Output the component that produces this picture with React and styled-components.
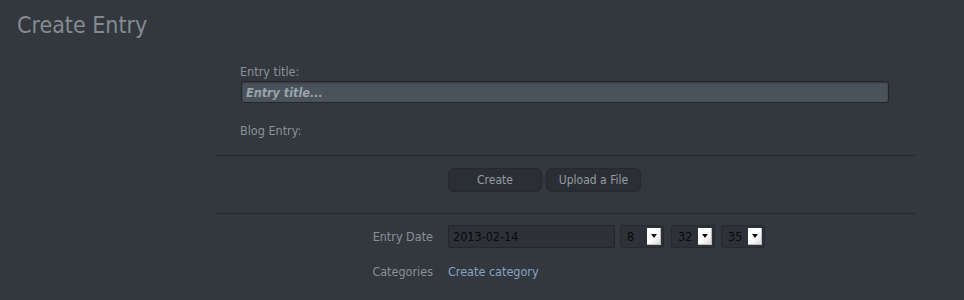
import React, { useState } from 'react'
import styled, { createGlobalStyle } from 'styled-components'

const GlobalStyle = createGlobalStyle`
  html, body {
    margin: 0;
    padding: 0;
    background: #33373e;
  }
  body {
    font-family: "DejaVu Sans Condensed", "DejaVu Sans", "Liberation Sans", sans-serif;
    font-stretch: condensed;
    color: #8d9399;
  }
`

const Page = styled.div`
  width: 964px;
  height: 300px;
  background: #33373e;
  overflow: hidden;
`

const Header = styled.div`
  padding: 12px 17px 0;
  height: 50px;
  box-sizing: border-box;
`

const Title = styled.h1`
  margin: 0;
  font-size: 23px;
  font-weight: normal;
  color: #858b91;
`

const Form = styled.div`
  margin-left: 216px;
  width: 700px;
`

const Fields = styled.div`
  padding: 14px 26px 0 24px;
  height: 106px;
  box-sizing: border-box;
  border-bottom: 1px solid #26292e;
`

const FieldLabel = styled.label`
  display: block;
  font-size: 12.5px;
  color: #8b9298;
  margin-bottom: 2px;
`

const TitleInput = styled.input`
  display: block;
  width: 648px;
  height: 22px;
  box-sizing: border-box;
  margin: 0 0 20px 1px;
  padding: 0 4px;
  border: 1px solid #23272c;
  border-radius: 3px;
  background: #4a535b;
  box-shadow: inset 0 1px 2px rgba(0, 0, 0, 0.35);
  font-family: inherit;
  font-size: 12.5px;
  font-style: italic;
  font-weight: bold;
  color: #a3acb3;
  outline: none;
  &::placeholder {
    color: #9ba4ab;
  }
`

const Actions = styled.div`
  display: flex;
  gap: 4px;
  padding: 12px 0 0 232px;
  height: 58px;
  box-sizing: border-box;
  border-bottom: 1px solid #26292e;
`

const Button = styled.button`
  width: ${({ $w }) => $w}px;
  height: 23px;
  padding: 0;
  border: 1px solid #26292e;
  border-radius: 6px;
  background: #2b2f35;
  box-shadow: 0 1px 1px rgba(0, 0, 0, 0.25);
  font-family: inherit;
  font-size: 12px;
  color: #979ca2;
  cursor: pointer;
`

const Rows = styled.div`
  padding-top: 11px;
`

const Row = styled.div`
  display: flex;
  align-items: center;
  gap: 15px;
  height: ${({ $h }) => $h}px;
`

const RowLabel = styled.span`
  width: 217px;
  text-align: right;
  font-size: 12.5px;
  color: #8a9097;
`

const Controls = styled.div`
  display: flex;
  align-items: center;
  gap: 5px;
`

const DateInput = styled.input`
  width: 167px;
  height: 23px;
  box-sizing: border-box;
  margin: 0;
  padding: 0 4px;
  border: 1px solid #23262b;
  border-radius: 2px;
  background: #2e3238;
  font-family: inherit;
  font-size: 12.5px;
  color: #08090a;
  outline: none;
`

const Select = styled.div`
  display: flex;
  align-items: center;
  justify-content: space-between;
  width: 44px;
  height: 23px;
  box-sizing: border-box;
  padding: 0 2px 0 6px;
  margin-left: ${({ $ml }) => $ml || 0}px;
  border: 1px solid #26292e;
  border-radius: 3px;
  background: #2e3238;
  font-size: 12.5px;
  color: #08090a;
`

const Arrow = styled.span`
  display: flex;
  align-items: center;
  justify-content: center;
  width: 14px;
  height: 17px;
  background: linear-gradient(135deg, #ffffff 55%, #d9d9d9 100%);
  border-right: 1px solid #bdbdbd;
  border-bottom: 1px solid #bdbdbd;
  box-sizing: border-box;

  &::after {
    content: '';
    border-left: 3px solid transparent;
    border-right: 3px solid transparent;
    border-top: 4px solid #111;
  }
`

const Link = styled.a`
  font-size: 12.5px;
  color: #84a5c2;
  text-decoration: none;
  cursor: pointer;
`

const TimeSelect = ({ value, ml }) => (
  <Select $ml={ml}>
    <span>{value}</span>
    <Arrow />
  </Select>
)

export default function App() {
  const [title, setTitle] = useState('')
  const [date, setDate] = useState('2013-02-14')
  return (
    <Page>
      <GlobalStyle />
      <Header>
        <Title>Create Entry</Title>
      </Header>
      <Form>
        <Fields>
          <FieldLabel>Entry title:</FieldLabel>
          <TitleInput value={title} placeholder="Entry title..." onChange={e => setTitle(e.target.value)} />
          <FieldLabel>Blog Entry:</FieldLabel>
        </Fields>
        <Actions>
          <Button $w={94}>Create</Button>
          <Button $w={95}>Upload a File</Button>
        </Actions>
        <Rows>
          <Row $h={23}>
            <RowLabel>Entry Date</RowLabel>
            <Controls>
              <DateInput value={date} onChange={e => setDate(e.target.value)} />
              <TimeSelect value="8" />
              <TimeSelect value="32" ml={2} />
              <TimeSelect value="35" ml={1} />
            </Controls>
          </Row>
          <Row $h={46}>
            <RowLabel>Categories</RowLabel>
            <Link>Create category</Link>
          </Row>
        </Rows>
      </Form>
    </Page>
  )
}
